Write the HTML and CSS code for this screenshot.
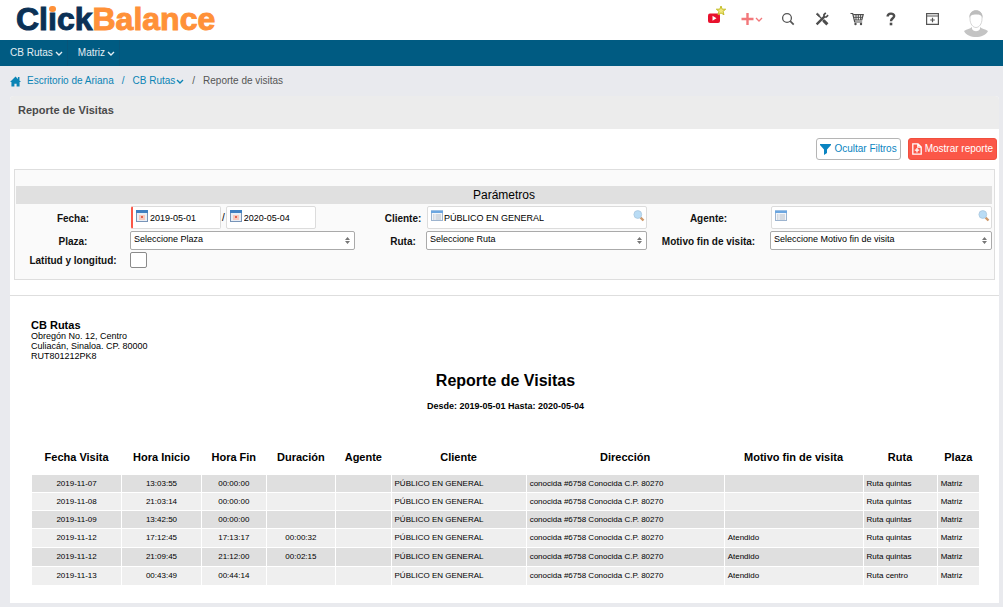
FILE: index.html
```html
<!DOCTYPE html>
<html lang="es">
<head>
<meta charset="utf-8">
<title>Reporte de Visitas</title>
<link rel="stylesheet" href="styles.css">
</head>
<body>
<header class="topbar">
  <a class="logo" href="#"><span class="logo-click">Cl<span class="logo-i">ı<span class="logo-dot"></span></span>ck</span><span class="logo-balance">Balance</span></a>
  <div class="tools">
    <button class="tool tool-video" type="button" aria-label="Videos"><svg width="22" height="22" viewBox="0 0 22 22"><rect x="2" y="9.500" width="12" height="9.500" rx="2" fill="#e8112d"/><path d="M6.500 11.700v5l4-2.500z" fill="#fff"/><path d="M15 2l1.200 3.200h3.500l-2.700 2.200 1 3.400-3-1.900-3 1.900 1-3.400-2.700-2.200h3.500z" fill="#f1e67c" stroke="#c3bd28" stroke-width="1"/></svg></button>
    <button class="tool" type="button" aria-label="Agregar"><svg width="22" height="14" viewBox="0 0 22 14"><path d="M6.500 1v12M.5 7h12" stroke="#f2777a" stroke-width="2.400"/><path d="M15 6l3 3 3-3" fill="none" stroke="#f2777a" stroke-width="1.300"/></svg></button>
    <button class="tool" type="button" aria-label="Buscar"><svg width="14" height="14" viewBox="0 0 14 14"><circle cx="6" cy="6" r="4.400" fill="none" stroke="#555" stroke-width="1.300"/><path d="M9.200 9.200l3.500 3.500" stroke="#555" stroke-width="1.700"/></svg></button>
    <button class="tool" type="button" aria-label="Herramientas"><svg width="14" height="14" viewBox="0 0 14 14" fill="none" stroke="#4d4d4d"><path d="M1.200 2.200l1.200-1.200 2.300 2.300-1.200 1.200z" fill="#4d4d4d" stroke-width=".6"/><path d="M4 4l5 5" stroke-width="1.300"/><path d="M8.400 8.400l4 4" stroke-width="3"/><path d="M9.600 4.400L1.600 12.400" stroke-width="2.300"/><path d="M10.800.9L9 2.700V5h2.300l1.800-1.800" stroke-width="1.700"/></svg></button>
    <button class="tool" type="button" aria-label="Carrito"><svg width="14" height="14" viewBox="0 0 14 14"><path d="M.5 1.500h2.200l2 8.500h7.500" fill="none" stroke="#4d4d4d" stroke-width="1.200"/><path d="M3.200 2.600h10L11.800 8H4.500" fill="none" stroke="#4d4d4d" stroke-width="1.200"/><path d="M6 3v5M8.300 3v5M10.600 3v5M4 5.300h8.500" stroke="#4d4d4d"/><circle cx="5.500" cy="12" r="1.200" fill="#4d4d4d"/><circle cx="11" cy="12" r="1.200" fill="#4d4d4d"/></svg></button>
    <button class="tool" type="button" aria-label="Ayuda"><svg width="10" height="14" viewBox="0 0 10 14"><path d="M1.600 4.600C1.600.8 8.200.6 8.200 4.100 8.200 6.300 5 6.400 5 9.200" fill="none" stroke="#4d4d4d" stroke-width="2.400"/><rect x="3.700" y="10.700" width="2.600" height="2.600" fill="#4d4d4d"/></svg></button>
    <button class="tool" type="button" aria-label="Nueva ventana"><svg width="13" height="12" viewBox="0 0 13 12"><path d="M.6.600h11.800v10.800H.6zM.6 3h11.800" fill="none" stroke="#555" stroke-width="1.200"/><path d="M6.500 4.700v4.600M4.200 7h4.600" stroke="#555" stroke-width="1.200"/></svg></button>
    <button class="tool tool-profile" type="button" aria-label="Perfil"><svg width="26" height="28" viewBox="0 0 26 28"><path d="M1 22c3-2 6-2 8-4h8c2 2 5 2 8 4-2 4-7 6-12 6S3 26 1 22z" fill="#c4c4c4"/><path d="M9 15v5c2 3 6 3 8 0v-5z" fill="#fff"/><path d="M7 7c0-7 12-7 12 0v3c0 5-3 8.500-6 8.500S7 15 7 10z" fill="#fff" stroke="#ccc" stroke-width=".8"/><path d="M6.500 9C5.500-1.500 20.500-1.500 19.500 9c-1-3-3-3.500-6.500-3.500S7.500 6 6.500 9z" fill="#bdbdbd"/></svg></button>
  </div>
</header>
<nav class="menu">
  <a class="menu-item" href="#">CB Rutas <svg class="chevron" viewBox="0 0 8 5"><path d="M1 1l3 3 3-3"/></svg></a>
  <a class="menu-item" href="#">Matriz <svg class="chevron" viewBox="0 0 8 5"><path d="M1 1l3 3 3-3"/></svg></a>
</nav>
<nav class="crumbs">
  <svg class="home" viewBox="0 0 10 10"><path d="M5 .5L0 5.500h1.300V9.500H4V7h2v2.500h2.700v-4H10L8.600 4.100V1H7.200v1.700z" fill="#0a84b5"/></svg>
  <a href="#">Escritorio de Ariana</a>
  <span class="slash slash-blue">/</span>
  <a class="crumb-menu" href="#">CB Rutas<svg class="chevron" viewBox="0 0 8 5"><path d="M1 1l3 3 3-3"/></svg></a>
  <span class="slash">/</span>
  <span>Reporte de visitas</span>
</nav>
<main class="panel">
  <h1 class="panel-title">Reporte de Visitas</h1>
  <div class="actions">
    <button class="btn" type="button"><svg width="11" height="11" viewBox="0 0 11 11"><path d="M0 0h11v1L7 5.500V9l-3 2V5.500L0 1z" fill="#0a84c1"/></svg>Ocultar Filtros</button>
    <button class="btn btn-main" type="button"><svg width="10" height="12" viewBox="0 0 10 12" fill="none" stroke="#fff" stroke-width="1.300"><path d="M.8.800H6l3.200 3.200v7.200H.8zM5.800.800v3.400h3.400M5 5v4.500M2.800 7.200h4.400"/></svg>Mostrar reporte</button>
  </div>
  <form class="filters">
    <h2 class="filters-title">Parámetros</h2>
    <div class="grid">
      <label for="desde">Fecha:</label>
      <div class="dates">
        <div class="box box-required"><svg class="ico" viewBox="0 0 12 12"><rect x=".5" y=".5" width="11" height="11" fill="#e9eef5" stroke="#7894b8"/><path d="M0 0h12v3H0z" fill="#3f7fc1"/><path d="M3 5h6v5H3z" fill="#f7c9bd"/><path d="M5 6h2v2H5z" fill="#e26350"/></svg><input id="desde" value="2019-05-01"></div>
        <span>/</span>
        <div class="box"><svg class="ico" viewBox="0 0 12 12"><rect x=".5" y=".5" width="11" height="11" fill="#e9eef5" stroke="#7894b8"/><path d="M0 0h12v3H0z" fill="#3f7fc1"/><path d="M3 5h6v5H3z" fill="#f7c9bd"/><path d="M5 6h2v2H5z" fill="#e26350"/></svg><input aria-label="Fecha hasta" value="2020-05-04"></div>
      </div>
      <label for="cliente">Cliente:</label>
      <div class="box box-search"><svg class="ico" viewBox="0 0 12 12"><rect x=".5" y="1" width="11" height="9.500" fill="#f3f6fa" stroke="#9db4cf"/><path d="M0 .5h12v2.500H0z" fill="#6ca6e0"/><path d="M2 5h1.500M4.500 5H10M2 7h1.500M4.500 7H10M2 9h1.500M4.500 9H10" stroke="#b5bdc8"/></svg><input id="cliente" value="PÚBLICO EN GENERAL"><svg class="lens" viewBox="0 0 12 12"><path d="M7.500 7.500l3 3" stroke="#cf9a6c" stroke-width="2.400"/><circle cx="4.800" cy="4.500" r="3.900" fill="#b9dcf5" stroke="#a9c6de" stroke-width=".8"/></svg></div>
      <label for="agente">Agente:</label>
      <div class="box box-search"><svg class="ico" viewBox="0 0 12 12"><rect x=".5" y="1" width="11" height="9.500" fill="#f3f6fa" stroke="#9db4cf"/><path d="M0 .5h12v2.500H0z" fill="#6ca6e0"/><path d="M2 5h1.500M4.500 5H10M2 7h1.500M4.500 7H10M2 9h1.500M4.500 9H10" stroke="#b5bdc8"/></svg><input id="agente" value=""><svg class="lens" viewBox="0 0 12 12"><path d="M7.500 7.500l3 3" stroke="#cf9a6c" stroke-width="2.400"/><circle cx="4.800" cy="4.500" r="3.900" fill="#b9dcf5" stroke="#a9c6de" stroke-width=".8"/></svg></div>
      <label for="plaza">Plaza:</label>
      <select id="plaza" class="select-plaza"><option>Seleccione Plaza</option></select>
      <label for="ruta">Ruta:</label>
      <select id="ruta"><option>Seleccione Ruta</option></select>
      <label for="motivo">Motivo fin de visita:</label>
      <select id="motivo"><option>Seleccione Motivo fin de visita</option></select>
      <label for="latlong">Latitud y longitud:</label>
      <input id="latlong" class="check" type="checkbox">
    </div>
  </form>
  <section class="report">
    <address class="company"><strong>CB Rutas</strong>Obregón No. 12, Centro<br>Culiacán, Sinaloa. CP. 80000<br>RUT801212PK8</address>
    <h2 class="report-title">Reporte de Visitas</h2>
    <p class="report-range">Desde: 2019-05-01 Hasta: 2020-05-04</p>
    <table class="visits">
      <colgroup><col class="c-fecha"><col class="c-inicio"><col class="c-fin"><col class="c-duracion"><col class="c-agente"><col class="c-cliente"><col class="c-direccion"><col class="c-motivo"><col class="c-ruta"><col class="c-plaza"></colgroup>
      <thead><tr><th>Fecha Visita</th><th>Hora Inicio</th><th>Hora Fin</th><th>Duración</th><th>Agente</th><th>Cliente</th><th>Dirección</th><th>Motivo fin de visita</th><th>Ruta</th><th>Plaza</th></tr></thead>
      <tbody>
        <tr><td>2019-11-07</td><td>13:03:55</td><td>00:00:00</td><td></td><td></td><td>PÚBLICO EN GENERAL</td><td>conocida #6758 Conocida C.P. 80270</td><td></td><td>Ruta quintas</td><td>Matriz</td></tr>
        <tr><td>2019-11-08</td><td>21:03:14</td><td>00:00:00</td><td></td><td></td><td>PÚBLICO EN GENERAL</td><td>conocida #6758 Conocida C.P. 80270</td><td></td><td>Ruta quintas</td><td>Matriz</td></tr>
        <tr><td>2019-11-09</td><td>13:42:50</td><td>00:00:00</td><td></td><td></td><td>PÚBLICO EN GENERAL</td><td>conocida #6758 Conocida C.P. 80270</td><td></td><td>Ruta quintas</td><td>Matriz</td></tr>
        <tr class="attended"><td>2019-11-12</td><td>17:12:45</td><td>17:13:17</td><td>00:00:32</td><td></td><td>PÚBLICO EN GENERAL</td><td>conocida #6758 Conocida C.P. 80270</td><td>Atendido</td><td>Ruta quintas</td><td>Matriz</td></tr>
        <tr class="attended"><td>2019-11-12</td><td>21:09:45</td><td>21:12:00</td><td>00:02:15</td><td></td><td>PÚBLICO EN GENERAL</td><td>conocida #6758 Conocida C.P. 80270</td><td>Atendido</td><td>Ruta quintas</td><td>Matriz</td></tr>
        <tr class="attended"><td>2019-11-13</td><td>00:43:49</td><td>00:44:14</td><td></td><td></td><td>PÚBLICO EN GENERAL</td><td>conocida #6758 Conocida C.P. 80270</td><td>Atendido</td><td>Ruta centro</td><td>Matriz</td></tr>
      </tbody>
    </table>
  </section>
</main>
</body>
</html>
```

FILE: styles.css
```css
* { box-sizing: border-box; }
body {
  margin: 0;
  background: #e9eaee;
  color: #000;
  font: 10px/12px "Liberation Sans", Arial, sans-serif;
}
a { text-decoration: none; }
button, input, select { font: inherit; }
svg { display: block; flex: none; }

.topbar {
  display: flex;
  justify-content: space-between;
  height: 40px;
  padding: 0 8px 0 16px;
  background: #fff;
}
.logo { font-size: 32px; font-weight: bold; line-height: 38px; }
.logo-click { color: #0b3156; -webkit-text-stroke: 1px #0b3156; }
.logo-balance { color: #ff9138; -webkit-text-stroke: 1px #ff9138; }
.logo-i { position: relative; }
.logo-dot {
  position: absolute;
  top: 5px;
  left: 1px;
  width: 7px;
  height: 6px;
  border-radius: 3px;
  background: #ff9138;
}
.tools {
  display: grid;
  grid-template-columns: 34px 36px 35px 34px 35px 34px 49px 38px;
  align-items: center;
  height: 37px;
}
.tool {
  display: flex;
  justify-content: center;
  padding: 0;
  border: 0;
  background: none;
}
.tool-video { align-self: start; padding-top: 4px; }
.tool-profile { align-self: end; }

.menu { display: flex; height: 26px; background: #005b82; }
.menu-item {
  display: flex;
  align-items: center;
  gap: 2px;
  padding: 0 4px 0 10px;
  border-right: 1px solid #07557a;
  color: #e3eef3;
  line-height: 26px;
}
.chevron { width: 8px; height: 5px; fill: none; stroke: currentColor; stroke-width: 1.400; }

.crumbs {
  display: flex;
  align-items: center;
  height: 30px;
  padding: 0 10px;
  color: #555;
}
.crumbs a { color: #0a84b5; }
.home { width: 11px; height: 11px; margin-right: 6px; }
.slash { margin: 0 8px; }
.slash-blue { color: #0a84b5; }
.crumb-menu { display: flex; align-items: center; gap: 1px; }

.panel { margin: 0 4px 4px 10px; border-radius: 4px 4px 0 0; background: #fff; }
.panel-title {
  margin: 0;
  padding: 0 8px 4px;
  border-radius: 4px 4px 0 0;
  background: #ececec;
  color: #4a4a4a;
  font-size: 11px;
  line-height: 29px;
}
.actions { display: flex; justify-content: flex-end; gap: 7px; padding: 9px 2px; }
.btn {
  display: flex;
  align-items: center;
  gap: 3px;
  height: 22px;
  padding: 0 3px;
  border: 1px solid #b5b5b5;
  border-radius: 3px;
  background: #fff;
  color: #0a84c1;
  white-space: nowrap;
}
.btn-main { border-color: #f04f3e; background: #fb5748; color: #fff; }

.filters {
  margin: 0 4px;
  padding: 16px 2px 11px 1px;
  border: 1px solid #dedede;
  background: #fafafa;
}
.filters-title {
  margin: 0 0 2px;
  background: #e0e0e0;
  font-size: 12px;
  font-weight: normal;
  line-height: 18px;
  text-align: center;
}
.grid {
  display: grid;
  grid-template-columns: 114fr 250fr 46fr 221fr 123fr 222fr;
  row-gap: 2px;
  align-items: center;
}
.grid label {
  padding-top: 2px;
  color: #111;
  font-weight: bold;
  text-align: center;
  white-space: nowrap;
}
.dates { display: flex; gap: 1px; align-items: center; padding-left: 1px; }
.box {
  display: flex;
  align-items: flex-start;
  width: 90px;
  height: 23px;
  padding: 3px;
  border: 1px solid #dcdcdc;
  border-radius: 2px;
  background: #fff;
}
.box input {
  flex: 1;
  width: 0;
  height: 15px;
  padding: 0 0 0 2px;
  border: 0;
  background: none;
  color: #000;
  font-size: 9px;
}
.box-required { border-left: 2px solid #fb5748; }
.box-search { width: auto; margin-left: 1px; padding-right: 1px; }
.box-search input { padding-left: 1px; }
.ico { width: 12px; height: 12px; }
.lens { width: 12px; height: 12px; }
select {
  appearance: none;
  height: 19px;
  padding: 0 3px 3px;
  border: 1px solid #aaa;
  border-radius: 2px;
  background: #fff url("data:image/svg+xml,%3Csvg xmlns='http://www.w3.org/2000/svg' width='5' height='7'%3E%3Cpath d='M0 3l2.500-3L5 3zM0 4l2.500 3L5 4z' fill='%23777'/%3E%3C/svg%3E") no-repeat right 4px center;
  color: #000;
  font-size: 9px;
}
.select-plaza { width: 90%; }
.check {
  appearance: none;
  width: 17px;
  height: 16px;
  margin: 0;
  border: 1px solid #8a8a8a;
  border-radius: 2px;
  background: #fff;
}

.report {
  margin-top: 15px;
  padding: 24px 19px 17px 21px;
  border-top: 1px solid #dedede;
}
.company { font-size: 9px; font-style: normal; line-height: 10px; }
.company strong { display: block; font-size: 11px; line-height: 11px; }
.report-title { margin: 10px 0 0; font-size: 16px; line-height: 20px; text-align: center; }
.report-range { margin: 9px 0 0; font-size: 9px; font-weight: bold; text-align: center; }

.visits {
  width: 100%;
  margin-top: 28px;
  border-spacing: 1px;
  table-layout: fixed;
}
.visits th { height: 33px; padding: 0 0 2px; font-size: 11px; white-space: nowrap; }
.visits td {
  height: 17px;
  padding: 0 3px;
  background: #efefef;
  font-size: 8px;
  line-height: 10px;
  white-space: nowrap;
}
.visits tbody tr:nth-child(odd) td { background: #dfdfdf; }
.visits .attended td { height: 18px; }
.visits td:nth-child(-n+4) { text-align: center; }
.c-fecha { width: 9.500%; }
.c-inicio { width: 8.400%; }
.c-fin { width: 6.800%; }
.c-duracion { width: 7.300%; }
.c-agente { width: 5.800%; }
.c-cliente { width: 14.300%; }
.c-direccion { width: 21%; }
.c-motivo { width: 14.700%; }
.c-ruta { width: 7.800%; }
.c-plaza { width: 4.400%; }
```
